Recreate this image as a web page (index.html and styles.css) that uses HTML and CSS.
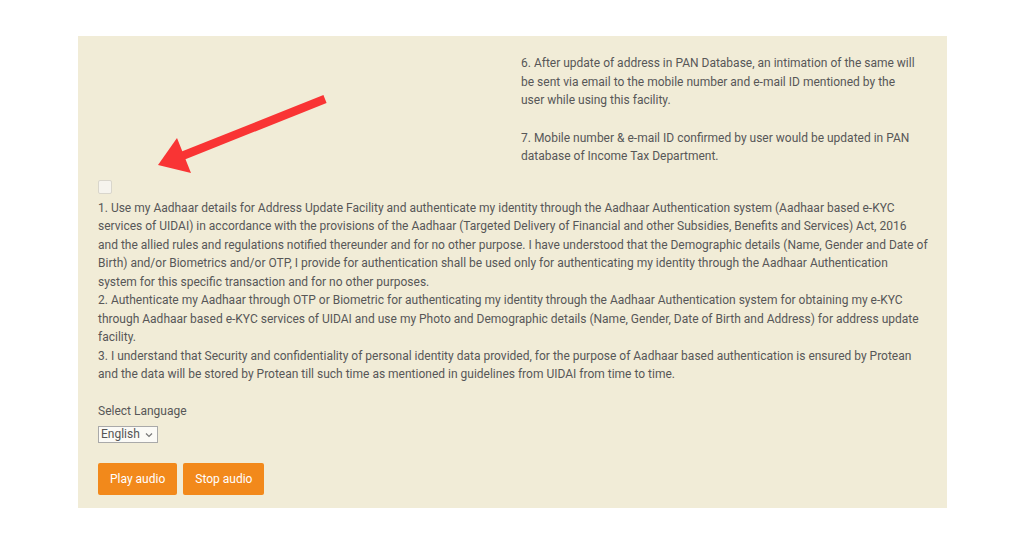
FILE: index.html
```html
<!DOCTYPE html>
<html>
<head>
<meta charset="utf-8">
<link rel="stylesheet" href="styles.css">
</head>
<body>
<div class="panel">
  <div class="notes">
    <p>6. After update of address in PAN Database, an intimation of the same will be sent via email to the mobile number and e-mail ID mentioned by the user while using this facility.</p>
    <p>7. Mobile number &amp; e-mail ID confirmed by user would be updated in PAN database of Income Tax Department.</p>
  </div>
  <div class="consent">
    <span class="checkbox"></span>
    <div class="terms">1. Use my Aadhaar details for Address Update Facility and authenticate my identity through the Aadhaar Authentication system (Aadhaar based e-KYC services of UIDAI) in accordance with the provisions of the Aadhaar (Targeted Delivery of Financial and other Subsidies, Benefits and Services) Act, 2016 and&nbsp;the allied rules and regulations notified thereunder and for no other purpose. I have understood that the Demographic details (Name, Gender and Date of Birth) and/or Biometrics and/or OTP, I provide for authentication shall be used only for authenticating my identity through the Aadhaar Authentication system&nbsp;for this specific transaction and for no other purposes.<br>2. Authenticate my Aadhaar through OTP or Biometric for authenticating my identity through the Aadhaar Authentication system for obtaining my e-KYC through Aadhaar based e-KYC services of UIDAI and use my Photo and Demographic details (Name, Gender, Date of Birth and Address) for address update facility.<br>3. I understand that Security and confidentiality of personal identity data provided, for the purpose of Aadhaar based authentication is ensured by Protean and the data will be stored by Protean till such time as mentioned in guidelines from UIDAI from time to time.</div>
  </div>
  <div class="lang">
    <div class="lang-label">Select Language</div>
    <div class="select">English <svg width="8" height="6" viewBox="0 0 8 6"><path d="M1 1.5 L4 4.5 L7 1.5" fill="none" stroke="#777" stroke-width="1.2"/></svg></div>
  </div>
  <div class="buttons">
    <button class="btn">Play audio</button>
    <button class="btn btn-stop">Stop audio</button>
  </div>
  <svg class="arrow" width="190" height="95" viewBox="0 0 190 95">
    <line x1="175" y1="9" x2="32" y2="66" stroke="#f93434" stroke-width="8.5"/>
    <polygon points="8,75 27,48 41,83" fill="#f93434"/>
  </svg>
</div>
</body>
</html>
```
FILE: styles.css
```css
html, body {
  margin: 0;
  padding: 0;
  background: #ffffff;
}
body {
  font-family: Roboto, "Liberation Sans", Arial, sans-serif;
  width: 1024px;
  height: 536px;
  overflow: hidden;
}
.panel {
  position: relative;
  box-sizing: border-box;
  margin: 36px 0 0 78px;
  width: 869px;
  height: 472px;
  background: #f1ecd7;
  padding: 18px 20px 0 20px;
  color: #575757;
  font-size: 12px;
  line-height: 18.5px;
}
.notes {
  margin-left: 423px;
  width: 400px;
}
.notes p {
  margin: 0 0 19px 0;
}
.notes p:last-child {
  margin-bottom: 14px;
}
.checkbox {
  display: block;
  width: 12px;
  height: 12px;
  border: 1px solid #d9d6cc;
  border-radius: 2px;
  background: #f6f4ee;
  margin-bottom: 5px;
}
.terms {
  width: 832px;
}
.lang {
  margin-top: 18px;
}
.lang-label {
  margin-bottom: 5px;
}
.select {
  display: inline-flex;
  align-items: center;
  gap: 5px;
  height: 15px;
  padding: 0 4px 0 2px;
  border: 1px solid #a9a9a9;
  background: #fbfaf6;
  font-size: 12px;
  line-height: 15px;
  color: #555;
}
.buttons {
  margin-top: 19px;
  display: flex;
  gap: 6px;
}
.btn {
  font-family: Roboto, "Liberation Sans", Arial, sans-serif;
  font-size: 12px;
  color: #fff;
  background: #f2891b;
  border: none;
  border-radius: 2px;
  height: 32px;
  padding: 0 12px;
}
.arrow {
  position: absolute;
  left: 72px;
  top: 54px;
}
```
